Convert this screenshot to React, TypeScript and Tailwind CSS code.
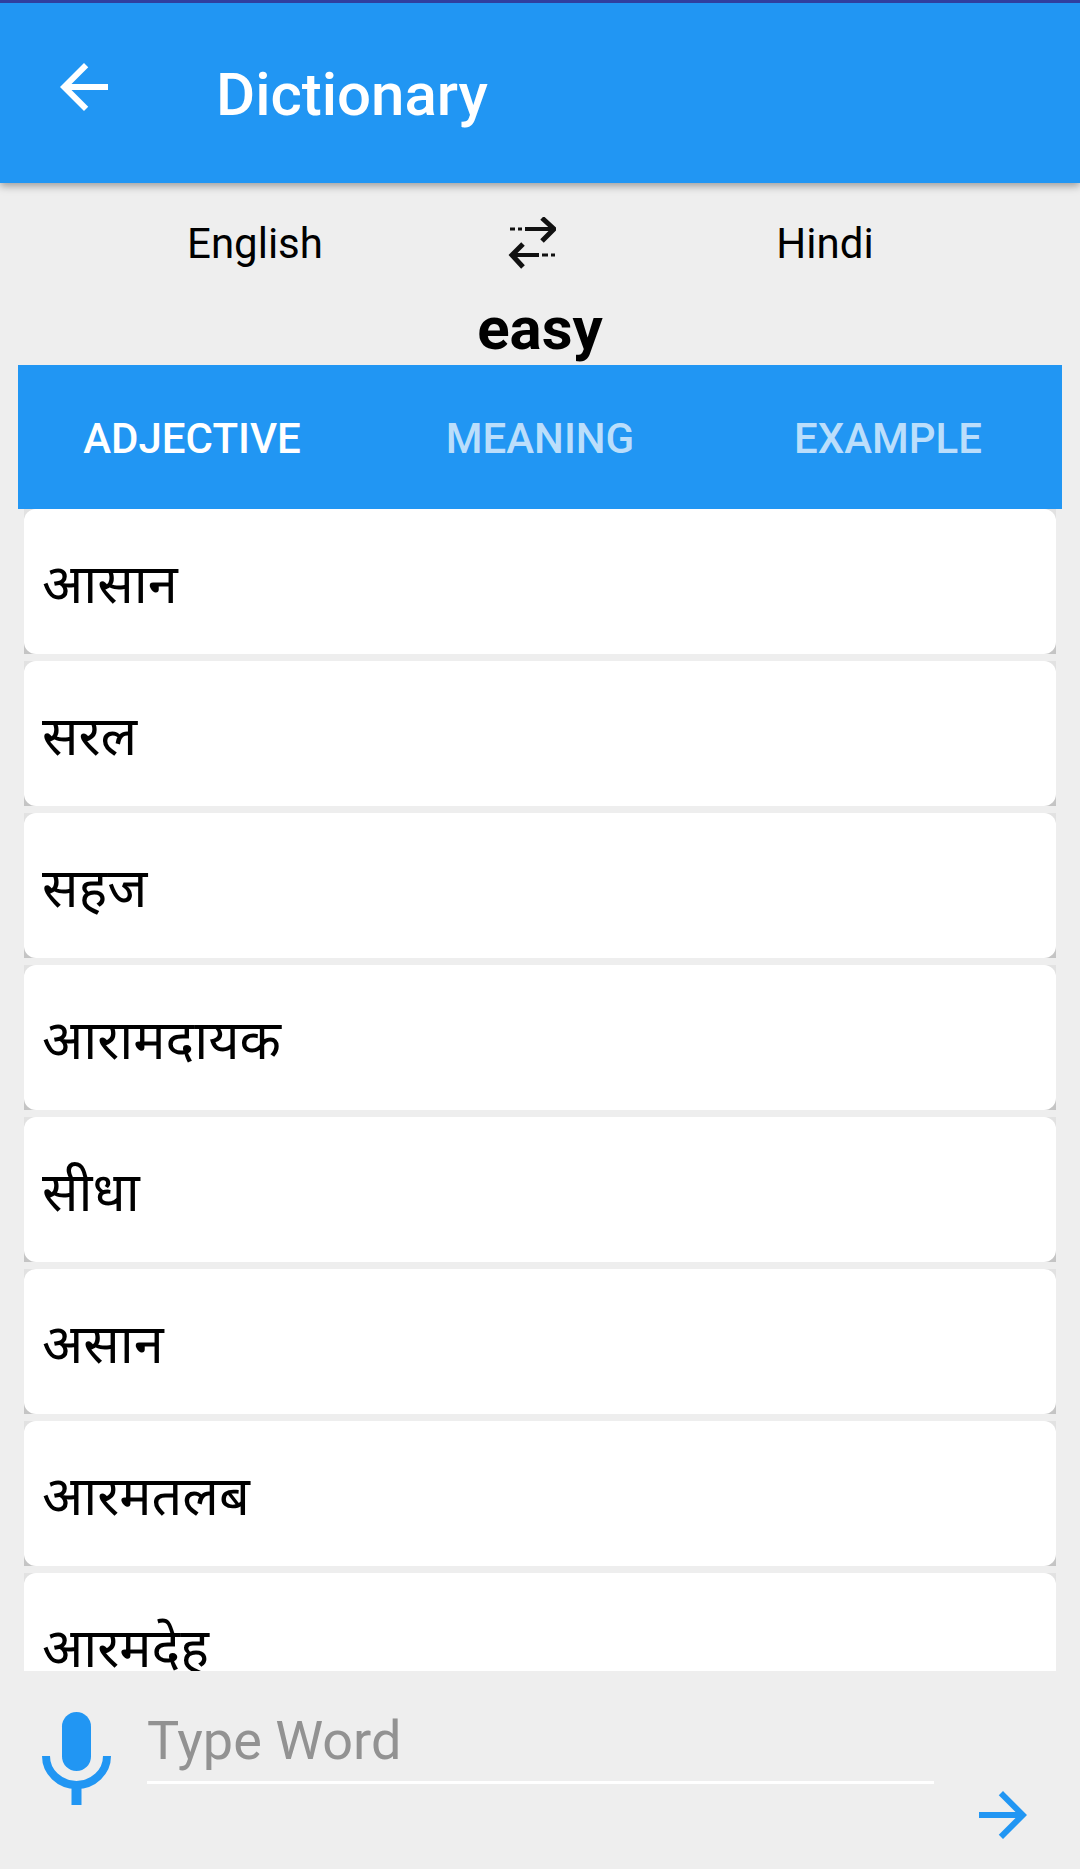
import { useState } from 'react';

const tabs = ['Adjective', 'Meaning', 'Example'];

const words = ['आसान', 'सरल', 'सहज', 'आरामदायक', 'सीधा', 'असान', 'आरमतलब', 'आरमदेह'];

const BackIcon = () => (
  <svg viewBox="0 0 24 24" className="size-18" fill="currentColor" aria-hidden="true">
    <path d="M20 11H7.83l5.59-5.59L12 4l-8 8 8 8 1.41-1.41L7.83 13H20v-2z" />
  </svg>
);

const ForwardIcon = () => (
  <svg viewBox="0 0 24 24" className="size-18" fill="currentColor" aria-hidden="true">
    <path d="M12 4l-1.41 1.41L16.17 11H4v2h12.17l-5.58 5.59L12 20l8-8z" />
  </svg>
);

const SwapIcon = () => (
  <svg viewBox="0 0 48 54" className="h-[54px] w-12" fill="none" stroke="#111" strokeWidth="4" aria-hidden="true">
    <path d="M17 12H45" />
    <path d="M34 1L46 12L34 24" strokeWidth="5" />
    <path d="M2 12h5M10 12h4" strokeWidth="3" />
    <path d="M31 38H4" />
    <path d="M15 27L4 38L15 50" strokeWidth="5" />
    <path d="M34 38h6M43 38h4" strokeWidth="3" />
  </svg>
);

const MicIcon = () => (
  <svg viewBox="0 0 69 94" className="h-[94px] w-[69px]" aria-hidden="true">
    <rect x="20" y="0" width="29" height="59" rx="14.5" fill="currentColor" />
    <path d="M4 44a30.5 29 0 0 0 61 0" fill="none" stroke="currentColor" strokeWidth="8" />
    <rect x="29.5" y="74" width="10" height="19" fill="currentColor" />
  </svg>
);

const App = () => {
  const [activeTab, setActiveTab] = useState(0);
  const [languages, setLanguages] = useState(['English', 'Hindi']);
  const [query, setQuery] = useState('');

  return (
    <div className="flex h-screen flex-col bg-[#eeeeee] font-['Roboto','Noto_Sans',sans-serif] text-black">
      {/* Toolbar */}
      <header className="relative flex h-[183px] shrink-0 items-start border-t-3 border-[#303f9f] bg-[#2196f3] px-12 text-white shadow-[0_3px_8px_rgba(0,0,0,0.35)]">
        <button type="button" aria-label="Back" className="mt-12">
          <BackIcon />
        </button>
        <h1 className="mt-14 ml-24 text-[60px] leading-[72px] font-medium">Dictionary</h1>
      </header>

      <main className="flex min-h-0 flex-1 flex-col px-[18px]">
        {/* Languages */}
        <div className="mt-9 flex h-[50px] shrink-0 items-center text-[42px] leading-[48px]">
          <span className="flex-1 text-center">{languages[0]}</span>
          <button
            type="button"
            aria-label="Swap languages"
            className="mr-4 flex w-20 justify-center"
            onClick={() => setLanguages([languages[1], languages[0]])}
          >
            <SwapIcon />
          </button>
          <span className="flex-1 text-center">{languages[1]}</span>
        </div>

        <h2 className="mt-6 text-center text-[60px] leading-[72px] font-bold">easy</h2>

        {/* Tabs */}
        <div role="tablist" className="grid shrink-0 grid-cols-3 bg-[#2196f3]">
          {tabs.map((tab, idx) => (
            <button
              key={tab}
              type="button"
              role="tab"
              aria-selected={activeTab === idx}
              onClick={() => setActiveTab(idx)}
              className={`h-36 pt-1 text-[42px] leading-[48px] font-medium uppercase ${activeTab === idx ? 'text-white' : 'text-[#bbdefb]'}`}
            >
              {tab}
            </button>
          ))}
        </div>

        {/* Translations */}
        <ul className="flex min-h-0 flex-1 flex-col gap-[7px] overflow-y-auto px-1.5 [scrollbar-width:none]">
          {words.map((word) => (
            <li key={word} className="shrink-0 bg-linear-to-b from-[#e2e2e2] to-[#c4c4c4]">
              <div className="flex h-[145px] items-center rounded-xl bg-white px-[18px] pt-[7px] text-[54px] leading-[72px]">
                {word}
              </div>
            </li>
          ))}
        </ul>
      </main>

      {/* Word input */}
      <form
        className="flex h-[198px] shrink-0 items-start pr-[41px] pl-[42px] text-[#2196f3]"
        onSubmit={(e) => e.preventDefault()}
      >
        <button type="button" aria-label="Speak" className="mt-[41px]">
          <MicIcon />
        </button>
        <input
          type="text"
          aria-label="Type Word"
          placeholder="Type Word"
          value={query}
          onChange={(e) => setQuery(e.target.value)}
          className="mt-9 mr-[33px] ml-9 h-[77px] min-w-0 flex-1 border-b-3 border-white bg-transparent pb-2 text-[54px] leading-[64px] text-black outline-none placeholder:text-[#929292]"
        />
        <button type="submit" aria-label="Search" className="mt-27">
          <ForwardIcon />
        </button>
      </form>
    </div>
  );
};

export default App;
